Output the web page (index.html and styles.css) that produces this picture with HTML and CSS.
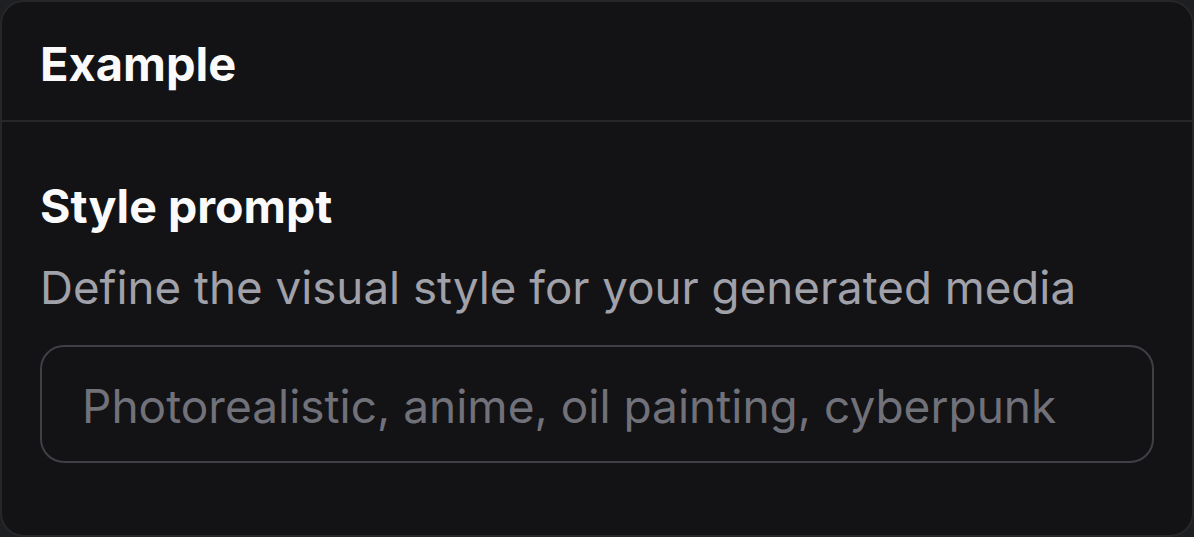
FILE: index.html
```html
<!DOCTYPE html>
<html lang="en">
<head>
  <meta charset="UTF-8">
  <title>Example</title>
  <link rel="stylesheet" href="styles.css">
</head>
<body>
  <!-- Settings card -->
  <div class="card">
    <div class="card-header">
      <h2>Example</h2>
    </div>
    <div class="card-body">
      <label class="field-label" for="stylePrompt">Style prompt</label>
      <p class="field-hint">Define the visual style for your generated media</p>
      <input class="field-input" id="stylePrompt" type="text" placeholder="Photorealistic, anime, oil painting, cyberpunk">
    </div>
  </div>
</body>
</html>
```

FILE: styles.css
```css
/* General Reset */
* {
  margin: 0;
  padding: 0;
  box-sizing: border-box;
}

body {
  font-family: 'Inter', 'Noto Sans', sans-serif;
  background-color: #1e1f22;
  width: 1194px;
  height: 537px;
  overflow: hidden;
}

/* Card */
.card {
  width: 1194px;
  height: 537px;
  background-color: #131316;
  border: 2px solid #27272a;
  border-radius: 24px;
  display: flex;
  flex-direction: column;
}

.card-header {
  height: 120px;
  padding: 5px 38px 0;
  display: flex;
  align-items: center;
  border-bottom: 2px solid #27272a;
}

.card-header h2 {
  font-size: 47px;
  font-weight: 700;
  line-height: 56px;
  color: #fafafa;
}

.card-body {
  padding: 56px 38px 0;
  display: flex;
  flex-direction: column;
}

.field-label {
  font-size: 46.5px;
  font-weight: 700;
  color: #fafafa;
  line-height: 56px;
}

.field-hint {
  font-size: 45.7px;
  color: #a1a1aa;
  line-height: 56px;
  margin-top: 26px;
}

.field-input {
  margin-top: 29px;
  width: 1114px;
  height: 118px;
  background: transparent;
  border: 2px solid #3f3f46;
  border-radius: 24px;
  padding: 4px 40px 0;
  font-family: inherit;
  font-size: 46px;
  color: #fafafa;
  outline: none;
}

.field-input::placeholder {
  color: #71717a;
}
```
